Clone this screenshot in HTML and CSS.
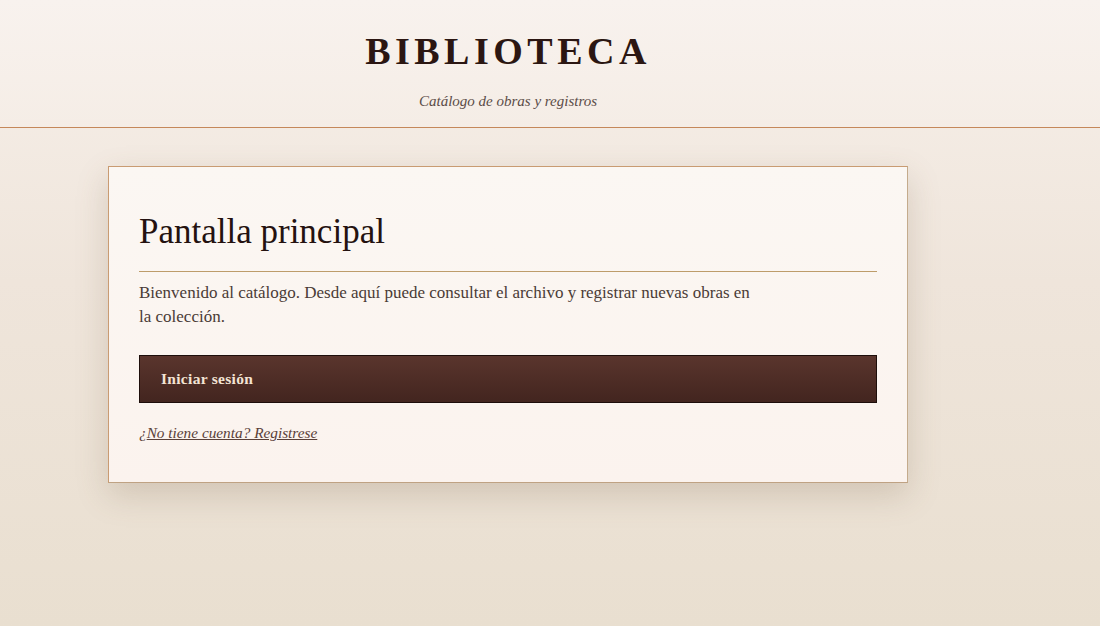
FILE: index.html
```html
<!DOCTYPE html>
<html lang="es">

<head>
    <meta charset="UTF-8">
    <meta name="viewport" content="width=device-width, initial-scale=1.0">
    <title>Biblioteca</title>
    <link rel="stylesheet" href="styles.css">
</head>

<body>
    <header id="top">
        <div class="wrap">
            <h1 class="brand">BIBLIOTECA</h1>
            <p class="tagline">Catálogo de obras y registros</p>
        </div>
    </header>

    <main class="wrap">
        <section class="card">
            <h2 class="card-title">Pantalla principal</h2>
            <p class="intro">Bienvenido al catálogo. Desde aquí puede consultar el archivo y registrar nuevas obras en la colección.</p>
            <button class="btn-login" type="button">Iniciar sesión</button>
            <p class="signup">¿<a href="#">No tiene cuenta? Registrese</a></p>
        </section>
    </main>
</body>

</html>
```

FILE: styles.css
```css
html {
    min-height: 100%;
    background: linear-gradient(180deg, #f7f0ea 0%, #efe5db 45%, #e9dfd0 100%);
}

body {
    margin: 0;
    min-height: 100vh;
    font-family: "Liberation Serif", "DejaVu Serif", serif;
    color: #3a2a26;
}

.wrap {
    width: 800px;
    margin-left: 108px;
}

#top {
    height: 127px;
    border-bottom: 1px solid #c5885a;
    background: linear-gradient(180deg, #f8f2ee, #f5ede6);
}

#top .wrap {
    text-align: center;
    padding-top: 27px;
}

.brand {
    margin: 0;
    font-size: 38px;
    font-weight: bold;
    letter-spacing: 4.5px;
    line-height: 48px;
    color: #2b1612;
}

.tagline {
    margin: 18px 0 0;
    font-style: italic;
    font-size: 15px;
    color: #5b4c47;
}

main {
    padding-top: 38px;
    padding-bottom: 60px;
}

.card {
    box-sizing: border-box;
    width: 800px;
    padding: 42px 30px 40px;
    background: linear-gradient(180deg, #fbf7f3, #fbf3ee);
    border: 1px solid #c99b72;
    border-right-color: #c4ab8c;
    border-bottom-color: #bfa283;
    box-shadow: 0 12px 30px rgba(120, 95, 70, 0.22);
}

.card-title {
    margin: 0;
    padding-bottom: 16px;
    border-bottom: 1px solid #bd9c6a;
    font-size: 35px;
    font-weight: 400;
    line-height: 46px;
    color: #241210;
}

.intro {
    margin: 9px 0 0;
    max-width: 615px;
    font-size: 17px;
    line-height: 24px;
    color: #4a3b36;
}

.btn-login {
    display: block;
    width: 100%;
    height: 48px;
    margin-top: 26px;
    padding: 0 21px;
    text-align: left;
    font-family: inherit;
    font-size: 15.5px;
    font-weight: bold;
    letter-spacing: 0.3px;
    color: #f3e4d4;
    background: linear-gradient(180deg, #5a352d, #43251f);
    border: 1px solid #1d0e0b;
    cursor: pointer;
}

.signup {
    margin: 21px 0 0;
    font-style: italic;
    font-size: 15.3px;
    color: #5a4038;
}

.signup a {
    color: #5a4038;
}
```
